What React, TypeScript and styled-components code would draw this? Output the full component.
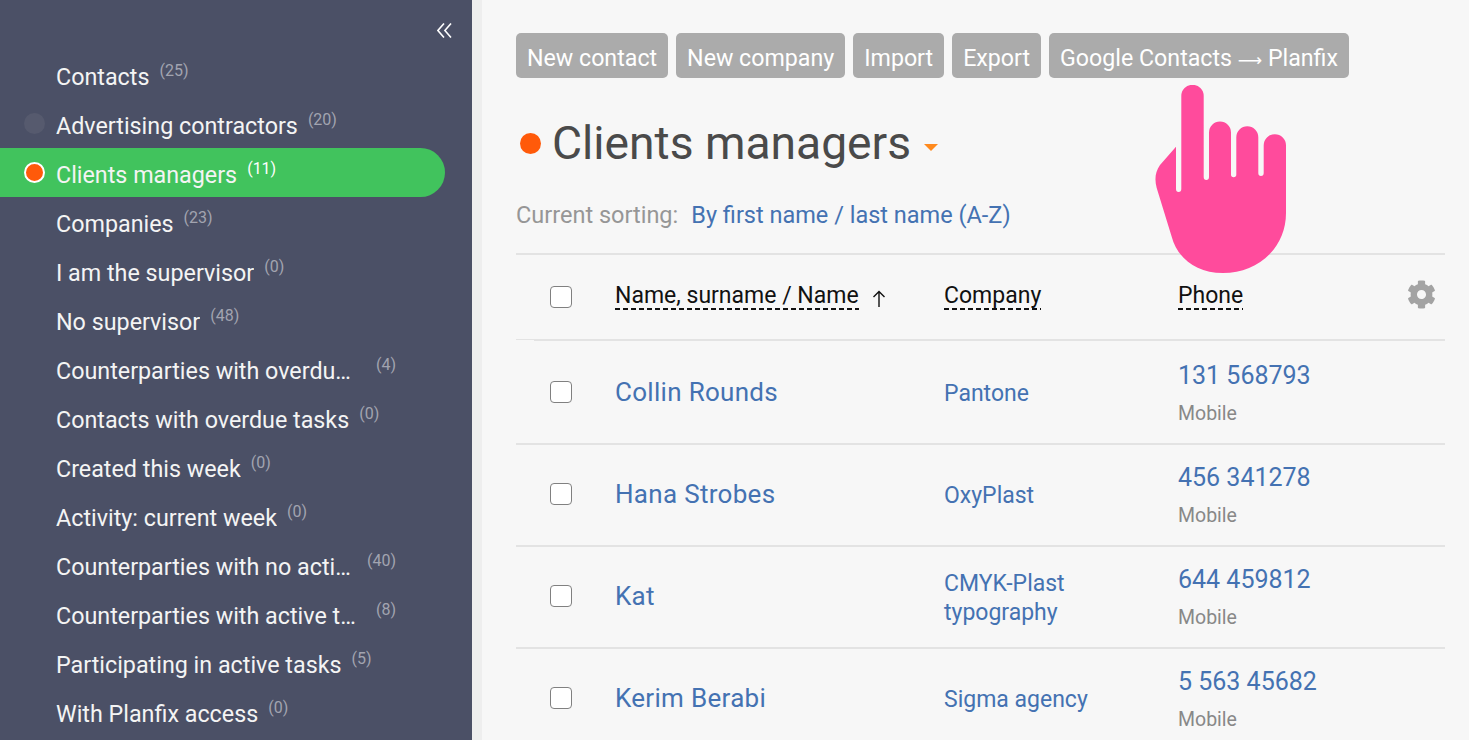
import React from 'react';
import styled, { createGlobalStyle } from 'styled-components';
import { FaCog } from 'react-icons/fa';

const sidebarItems = [
  { label: 'Contacts', count: 25 },
  { label: 'Advertising contractors', count: 20, dot: 'muted' },
  { label: 'Clients managers', count: 11, dot: 'orange', active: true },
  { label: 'Companies', count: 23 },
  { label: 'I am the supervisor', count: 0 },
  { label: 'No supervisor', count: 48 },
  { label: 'Counterparties with overdue tasks', count: 4, clipped: true },
  { label: 'Contacts with overdue tasks', count: 0 },
  { label: 'Created this week', count: 0 },
  { label: 'Activity: current week', count: 0 },
  { label: 'Counterparties with no activity', count: 40, clipped: true },
  { label: 'Counterparties with active tasks', count: 8, clipped: true },
  { label: 'Participating in active tasks', count: 5 },
  { label: 'With Planfix access', count: 0 },
];

const contacts = [
  { name: 'Collin Rounds', company: ['Pantone'], phone: '131 568793' },
  { name: 'Hana Strobes', company: ['OxyPlast'], phone: '456 341278' },
  { name: 'Kat', company: ['CMYK-Plast', 'typography'], phone: '644 459812' },
  { name: 'Kerim Berabi', company: ['Sigma agency'], phone: '5 563 45682' },
];

const App: React.FC = () => (
  <Page>
    <GlobalStyle />
    <Sidebar>
      <CollapseRow>
        <CollapseIcon viewBox="0 0 15 15">
          <path d="M7 .5L.9 7.5L7 14.5M14 .5L7.9 7.5L14 14.5" fill="none" stroke="#fff" strokeWidth="1.6" />
        </CollapseIcon>
      </CollapseRow>
      {sidebarItems.map((item) => (
        <SideItem key={item.label} $active={item.active}>
          <DotSlot>{item.dot && <SideDot $kind={item.dot} />}</DotSlot>
          <SideLabel $clipped={item.clipped}>{item.label}</SideLabel>
          <SideCount $active={item.active} $clipped={item.clipped}>
            ({item.count})
          </SideCount>
        </SideItem>
      ))}
    </Sidebar>
    <Main>
      <Toolbar>
        <ToolButton>New contact</ToolButton>
        <ToolButton>New company</ToolButton>
        <ToolButton>Import</ToolButton>
        <ToolButton>Export</ToolButton>
        <ToolButton>
          Google Contacts <ArrowGlyph>⟶</ArrowGlyph> Planfix
        </ToolButton>
      </Toolbar>
      <TitleRow>
        <TitleDot />
        <Title>Clients managers</Title>
        <Caret />
      </TitleRow>
      <Sorting>
        <SortingLabel>Current sorting:</SortingLabel>
        <SortingLink>By first name / last name (A-Z)</SortingLink>
      </Sorting>
      <HeadRow>
        <CheckCell>
          <Checkbox />
        </CheckCell>
        <HeadCell>
          <HeadText>Name, surname / Name</HeadText>
          <SortArrow viewBox="0 0 14 18">
            <path d="M7 17V1.5M1.5 7L7 1.5L12.5 7" fill="none" stroke="#111" strokeWidth="1.4" />
          </SortArrow>
        </HeadCell>
        <HeadCell>
          <HeadText>Company</HeadText>
        </HeadCell>
        <HeadCell>
          <HeadText>Phone</HeadText>
        </HeadCell>
        <GearCell>
          <FaCog size={29} color="#a3a3a3" />
        </GearCell>
      </HeadRow>
      {contacts.map((contact, index) => (
        <ContactRow key={contact.name} $first={index === 0}>
          <CheckCell>
            <Checkbox />
          </CheckCell>
          <ContactName>{contact.name}</ContactName>
          <CompanyName>
            {contact.company.map((line) => (
              <div key={line}>{line}</div>
            ))}
          </CompanyName>
          <PhoneCell>
            <PhoneNumber>{contact.phone}</PhoneNumber>
            <PhoneType>Mobile</PhoneType>
          </PhoneCell>
        </ContactRow>
      ))}
      <Hand viewBox="0 0 131 188">
        <path
          d="M21 61.7V104Q21 107 23.6 107Q26.3 107 26.3 104V11A11.2 11.2 0 0 1 48.7 11V92Q48.7 95 51.3 95Q54 95 54 92V47.5A11 11 0 0 1 76 47.5V89.5Q76 92.3 78.6 92.3Q81.3 92.3 81.3 89.5V52.3A11 11 0 0 1 103.3 52.3V88Q103.3 91 106 91Q108.7 91 108.7 88V60.3A11.15 11.15 0 0 1 131 60.3V128C131 163 103 188 68 188C40 188 22 172 16.7 151.7L1.7 103C-.5 95 0 87 5 80Z"
          fill="#ff4b9c"
        />
      </Hand>
    </Main>
  </Page>
);

const GlobalStyle = createGlobalStyle`
  html, body {
    margin: 0;
    height: 100%;
    overflow: hidden;
  }
  body {
    font-family: Roboto, "DejaVu Sans", sans-serif;
  }
`;

const Page = styled.div`
  display: flex;
  height: 740px;
  overflow: hidden;
  background: #f7f7f7;
`;

const Sidebar = styled.aside`
  width: 472px;
  flex: none;
  box-sizing: border-box;
  padding-right: 27px;
  background: #4b5066;
`;

const CollapseRow = styled.div`
  height: 50px;
  display: flex;
  justify-content: flex-end;
  align-items: flex-start;
  padding-top: 23px;
  box-sizing: border-box;
  margin-right: -7px;
`;

const CollapseIcon = styled.svg`
  width: 15px;
  height: 15px;
`;

const SideItem = styled.div<{ $active?: boolean }>`
  height: 49px;
  display: flex;
  align-items: center;
  padding: 0 49px 0 24px;
  background: ${(p) => (p.$active ? '#41c35d' : 'transparent')};
  border-radius: 0 25px 25px 0;
`;

const DotSlot = styled.span`
  width: 32px;
  flex: none;
  display: flex;
`;

const SideDot = styled.span<{ $kind: string }>`
  width: 21px;
  height: 21px;
  box-sizing: border-box;
  border-radius: 50%;
  background: ${(p) => (p.$kind === 'orange' ? '#ff5a0a' : '#565a6e')};
  border: ${(p) => (p.$kind === 'orange' ? '2px solid #fff' : '0')};
`;

const SideLabel = styled.span<{ $clipped?: boolean }>`
  font-size: 23.3px;
  line-height: 30px;
  padding-top: 4px;
  color: #f4f4f4;
  white-space: nowrap;
  overflow: hidden;
  text-overflow: ellipsis;
  ${(p) => p.$clipped && 'width: 302px; flex: none;'}
`;

const SideCount = styled.sup<{ $active?: boolean; $clipped?: boolean }>`
  font-size: 16px;
  line-height: 18px;
  margin: 0 0 7px ${(p) => (p.$clipped ? 'auto' : '10px')};
  color: ${(p) => (p.$active ? '#fff' : '#a2a4b0')};
`;

const Main = styled.main`
  position: relative;
  flex: 1;
  min-width: 0;
  box-sizing: border-box;
  padding: 33px 24px 0 34px;
  border-left: 10px solid #eeeeee;
`;

const Toolbar = styled.div`
  display: flex;
  gap: 8px;
`;

const ToolButton = styled.button`
  height: 45px;
  padding: 5px 11px 0;
  border: 0;
  border-radius: 5px;
  background: #ababab;
  color: #fff;
  font: 23.2px Roboto, "DejaVu Sans", sans-serif;
`;

const ArrowGlyph = styled.span`
  font-size: 17px;
`;

const TitleRow = styled.div`
  display: flex;
  align-items: center;
  height: 60px;
  margin-top: 35px;
  padding-left: 4px;
`;

const TitleDot = styled.span`
  width: 21px;
  height: 21px;
  border-radius: 50%;
  background: #ff5a0a;
  margin-right: 11px;
`;

const Title = styled.h1`
  margin: 0;
  font-size: 46.2px;
  font-weight: 400;
  color: #4a4a4a;
`;

const Caret = styled.span`
  margin: 8px 0 0 13px;
  border-style: solid;
  border-width: 7px 7px 0;
  border-color: #ff8a1e transparent transparent;
`;

const Sorting = styled.div`
  display: flex;
  gap: 13px;
  margin-top: 27px;
  font-size: 23.5px;
  line-height: 30px;
`;

const SortingLabel = styled.span`
  color: #969696;
`;

const SortingLink = styled.span`
  color: #4472b2;
`;

const tableGrid = `
  display: grid;
  grid-template-columns: 99px 329px 234px 1fr 60px;
  align-items: center;
  box-sizing: border-box;
`;

const HeadRow = styled.div`
  ${tableGrid}
  position: relative;
  height: 88px;
  margin-top: 23px;
  border-top: 2px solid #e3e3e3;
  border-bottom: 2px solid #e3e3e3;

  &::after {
    content: '';
    position: absolute;
    left: 0;
    bottom: -2px;
    width: 18px;
    height: 1px;
    background: #f7f7f7;
  }
`;

const CheckCell = styled.div`
  padding-left: 34px;
`;

const Checkbox = styled.span`
  display: block;
  width: 22px;
  height: 22px;
  box-sizing: border-box;
  border: 1px solid #808080;
  border-radius: 4px;
  background: #fff;
`;

const HeadCell = styled.div`
  display: flex;
  align-items: center;
  color: #111;
  font-size: 23px;
`;

const HeadText = styled.span`
  padding-bottom: 1px;
  margin-bottom: 2px;
  line-height: 27px;
  background: repeating-linear-gradient(90deg, #111 0 5px, transparent 5px 8px) left bottom / 100% 2px no-repeat;
`;

const SortArrow = styled.svg`
  width: 14px;
  height: 18px;
  margin: 4px 0 0 13px;
`;

const GearCell = styled.div`
  display: flex;
  justify-content: flex-end;
  padding: 0 9px 6px 0;
`;

const ContactRow = styled.div<{ $first?: boolean }>`
  ${tableGrid}
  height: 102px;
  margin-top: ${(p) => (p.$first ? '2px' : '0')};
  padding-bottom: 2px;
  border-bottom: 2px solid #e3e3e3;
`;

const ContactName = styled.div`
  color: #4472b2;
  font-size: 26px;
  letter-spacing: 0.3px;
`;

const CompanyName = styled.div`
  padding-top: 3px;
  color: #4472b2;
  font-size: 23px;
  line-height: 29px;
`;

const PhoneCell = styled.div`
  display: flex;
  flex-direction: column;
  gap: 14px;
  padding-top: 4px;
`;

const PhoneNumber = styled.span`
  color: #4472b2;
  font-size: 25px;
  line-height: 26px;
`;

const PhoneType = styled.span`
  color: #888;
  font-size: 19.5px;
  line-height: 22px;
`;

const Hand = styled.svg`
  position: absolute;
  left: 673px;
  top: 85px;
  width: 131px;
  height: 188px;
`;

export default App;
